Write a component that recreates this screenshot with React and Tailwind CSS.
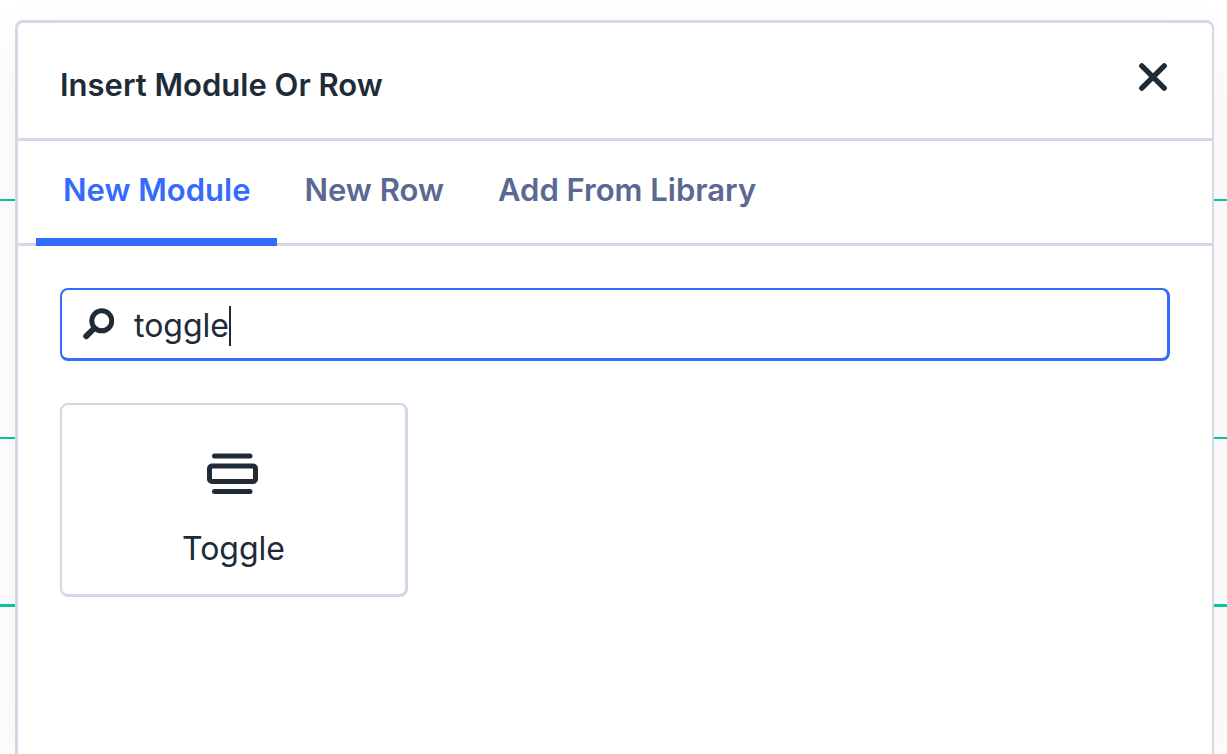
import React, { useState } from 'react';

const tabs = ['New Module', 'New Row', 'Add From Library'];

const CloseIcon = () => (
  <svg className="w-8 h-8 shrink-0" viewBox="0 0 32 32" fill="none" stroke="currentColor" strokeWidth="5.4" strokeLinecap="round">
    <path d="M4.8 4.8 27.2 27.2M27.2 4.8 4.8 27.2" />
  </svg>
);

const SearchIcon = () => (
  <svg className="w-8 h-8 mb-1 shrink-0" viewBox="0 0 32 32" fill="none" stroke="currentColor" strokeLinecap="round">
    <circle cx="19.8" cy="12.8" r="10" strokeWidth="5" />
    <path d="M11.5 21 4.3 28.2" strokeWidth="6" />
  </svg>
);

const ToggleIcon = () => (
  <svg className="w-14 h-[42px]" viewBox="0 0 56 42" fill="none" stroke="currentColor" strokeWidth="5" strokeLinecap="round">
    <path d="M8.5 3h35.5M8.5 38.5h35.5" />
    <rect x="3.5" y="13" width="46" height="15.5" rx="2.5" />
  </svg>
);

const modules = [{ name: 'Toggle', icon: ToggleIcon }];

const Canvas = () => (
  <div className="col-start-1 row-start-1">
    <div className="h-[201px] border-b-2 border-[#0ac99c]" />
    <div className="h-[238px] border-b-2 border-[#0ac99c]" />
    <div className="h-[168px] border-b-3 border-[#0ac99c]" />
  </div>
);

const App = () => {
  const [activeTab, setActiveTab] = useState('New Module');
  const [search, setSearch] = useState('toggle');

  const results = modules.filter((m) =>
    m.name.toLowerCase().includes(search.toLowerCase())
  );

  return (
    <div className="grid min-h-screen bg-white text-[#202b38] text-[32px] leading-[48px] font-['Inter',sans-serif]">
      <Canvas />

      <div className="col-start-1 row-start-1 mt-5 ml-[15px] mr-[13px] bg-white border-t-3 border-l-3 border-r-2 border-[#d3d7e6] rounded-t-lg shadow-[0_20px_60px_rgba(0,0,0,0.06)]">
        <div className="flex justify-between items-start px-[42px] pt-[34px] pb-[29px] border-b-3 border-[#d3d7e6]">
          <h1 className="mt-1 text-[31px] font-semibold">Insert Module Or Row</h1>
          <button aria-label="Close" className="w-[34px] h-10 flex items-center justify-center">
            <CloseIcon />
          </button>
        </div>

        <div className="flex h-[105px] pl-[18px] border-b-3 border-[#d3d7e6]">
          {tabs.map((tab) => (
            <button
              key={tab}
              onClick={() => setActiveTab(tab)}
              className={`h-[105px] px-[27px] border-b-8 text-[31px] font-semibold ${
                activeTab === tab
                  ? 'border-[#336bff] text-[#336bff]'
                  : 'border-transparent text-[#5a6893]'
              }`}
            >
              {tab}
            </button>
          ))}
        </div>

        <div className="px-[42px] py-[42px]">
          <label className="flex items-center h-[73px] pl-5 pt-1 border-t-2 border-l-2 border-r-3 border-b-3 border-[#336bff] rounded-lg cursor-text">
            <SearchIcon />
            <input
              type="text"
              aria-label="Search modules"
              value={search}
              onChange={(e) => setSearch(e.target.value)}
              className="ml-5 field-sizing-content outline-none caret-transparent"
            />
            <span className="w-0.5 h-10 bg-[#202b38]" />
          </label>

          <div className="flex flex-wrap mt-[42px]">
            {results.map(({ name, icon: Icon }) => (
              <button
                key={name}
                className="w-[348px] h-[194px] flex flex-col items-center pt-12 border-t-2 border-l-2 border-r-3 border-b-3 border-[#d3d7e6] rounded-lg"
              >
                <Icon />
                <span className="mt-[30px]">{name}</span>
              </button>
            ))}
          </div>
        </div>
      </div>
    </div>
  );
};

export default App;
